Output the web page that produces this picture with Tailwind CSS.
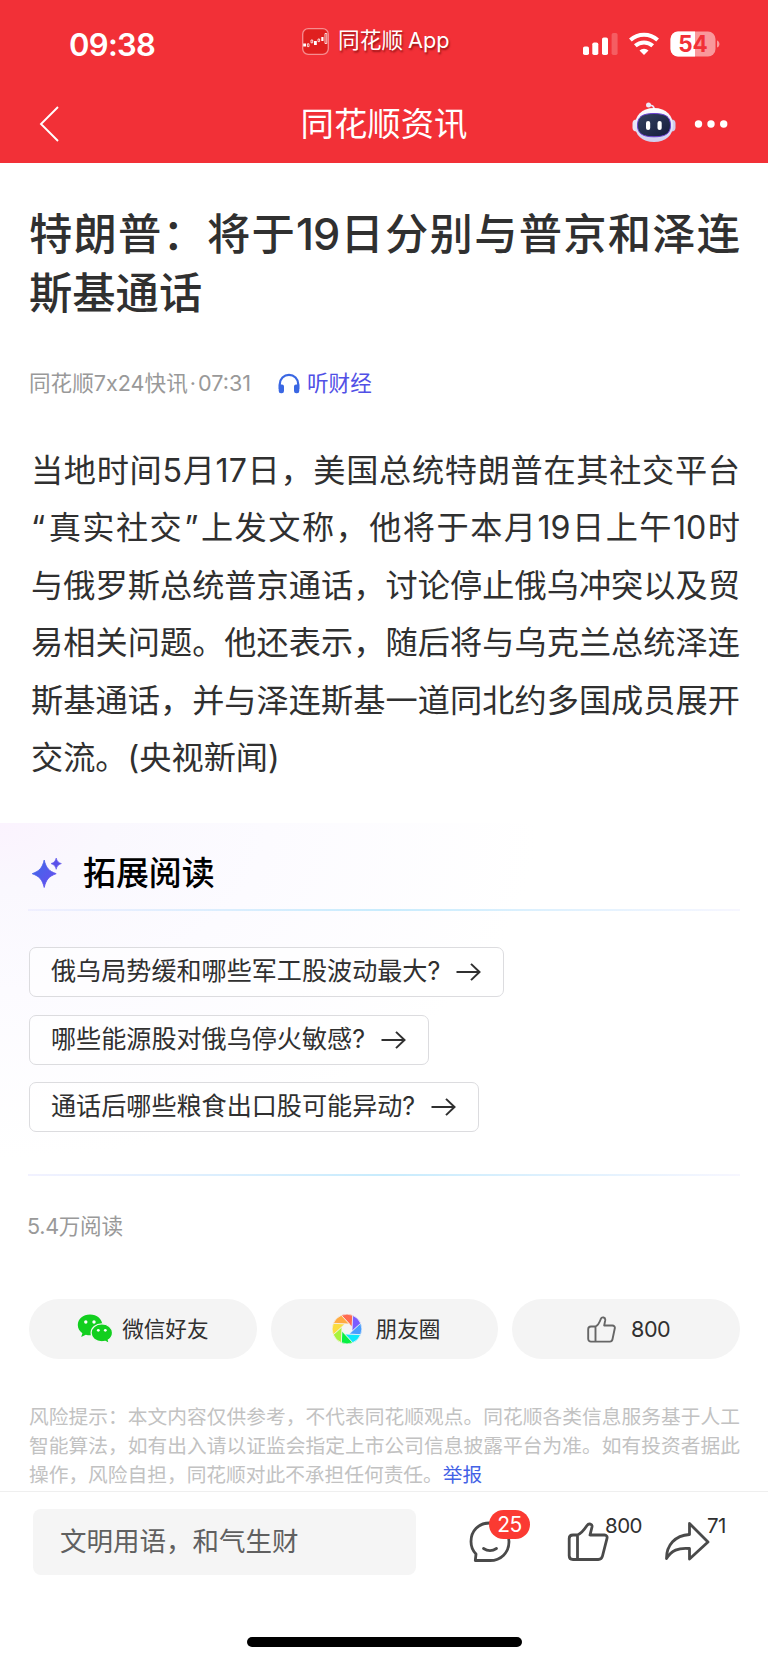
<!DOCTYPE html>
<html lang="zh-CN">

<head>
  <meta charset="UTF-8">
  <meta name="viewport" content="width=device-width, initial-scale=1.0">
  <title>同花顺资讯</title>
  <script src="https://cdn.jsdelivr.net/npm/@tailwindcss/browser@4"></script>
</head>

<body class="bg-white w-[768px] h-[1662px] overflow-hidden flex flex-col font-['Inter','Noto_Sans_CJK_SC',sans-serif] text-[#303030] whitespace-nowrap">

  <!-- Header -->
  <header class="bg-[#f23037] h-[163px] shrink-0 text-white">
    <!-- Status bar -->
    <div class="h-[88px] grid grid-cols-[302px_1fr_auto] items-center">
      <div class="pl-[69px] text-[31px] font-semibold leading-none tracking-[-0.700px]">09:38</div>
      <div class="flex items-center gap-[9px] -mt-[6px]">
        <svg class="w-[27px] h-[27px]" viewBox="0 0 27 27" fill="none">
          <rect x=".7" y=".7" width="25.6" height="25.6" rx="5.5" fill="#e0201f" stroke="#f68d90" stroke-width="1.3" />
          <path d="M1.200 15.500h2.800v3H1.200zM12 13h2.800v4H12zM19.300 9h2.200v4h-2.200z" fill="#fff" />
          <path d="M5.400 15.800h1.600v2.800H5.400zM9 12h1.700v2.800H9zM16 11h1.600v2.600H16zM23 5.500h1.800v10H23z" stroke="#fff" stroke-width=".8" />
        </svg>
        <div class="text-[21.7px] leading-none [text-shadow:1px_2px_2px_rgba(90,0,0,0.6)]">同花顺<span class="ml-[5px]">App</span></div>
      </div>
      <div class="flex items-center pr-[48px]">
        <svg class="w-[138px] h-[26px]" viewBox="0 0 138 26">
          <g fill="#fff">
            <rect x="1" y="15.500" width="6" height="8.500" rx="1.800" />
            <rect x="10.300" y="11.500" width="6" height="12.500" rx="1.800" />
            <rect x="20" y="6.500" width="6" height="17.500" rx="1.800" />
            <rect x="29.600" y="2" width="6" height="22" rx="1.800" opacity=".22" />
            <path d="M62 24l-4.500-4.600a6.600 6.600 0 0 1 9 0z" />
          </g>
          <path d="M48.400 9a20 20 0 0 1 27.200 0M53.300 14.800a13 13 0 0 1 17.400 0" fill="none" stroke="#fff" stroke-width="4" />
          <rect x="88.500" y=".5" width="45" height="25" rx="7.500" fill="#fff" opacity=".5" />
          <path d="M113 .5v25H96a7.500 7.500 0 0 1-7.500-7.500V8A7.500 7.500 0 0 1 96 .5z" fill="#fff" />
          <path d="M135 9.500c3.300 1 3.300 6 0 7z" fill="#fff" opacity=".5" />
          <text x="111" y="21" text-anchor="middle" font-family="Inter" font-weight="700" font-size="22.500" fill="#f23037">54</text>
        </svg>
      </div>
    </div>
    <!-- Nav bar -->
    <div class="h-[73px] grid grid-cols-3 items-center">
      <svg class="ml-[38px] -mt-[2px] w-[22px] h-[38px]" viewBox="0 0 22 38" fill="none" stroke="#fff" stroke-width="1.900">
        <path d="M20 2L3 19l17 17" />
      </svg>
      <h1 class="text-center text-[33.400px] leading-none">同花顺资讯</h1>
      <div class="flex items-center justify-end gap-[18px] pr-[40px] -mt-[3px]">
        <svg class="w-[44px] h-[42px]" viewBox="0 0 44 42">
          <defs>
            <linearGradient id="shell" x1="0" y1="0" x2="0" y2="1">
              <stop offset="0" stop-color="#fff" />
              <stop offset="1" stop-color="#cfcdee" />
            </linearGradient>
            <linearGradient id="visor" x1="0" y1="0" x2="1" y2="1">
              <stop offset="0" stop-color="#34425f" />
              <stop offset="1" stop-color="#151b3c" />
            </linearGradient>
          </defs>
          <path d="M16 3.500c4-1 6.500 1 6 4" fill="none" stroke="#e9e6f8" stroke-width="1.600" />
          <circle cx="16.500" cy="3" r="2.500" fill="#eceafa" />
          <rect x=".5" y="17.500" width="8" height="12" rx="4" fill="#e6e4f6" />
          <rect x="35.500" y="17.500" width="8" height="12" rx="4" fill="#cfccec" />
          <path d="M22 6C34.500 6 41 14 41 23.500S34 40 22 40 3 33 3 23.500 9.500 6 22 6z" fill="url(#shell)" />
          <path d="M22 11.500c12 0 16.500 3.500 16.500 11.800S33.500 34.800 22 34.800 5.500 31.500 5.500 23.300 10 11.500 22 11.500z" fill="url(#visor)" stroke="#6a3fd0" stroke-width="1" />
          <rect x="14" y="19" width="4.200" height="9" rx="2.100" fill="#fff" />
          <rect x="25.500" y="19" width="4.200" height="9" rx="2.100" fill="#fff" />
        </svg>
        <svg class="mt-[2px] w-[34px] h-[8px]" viewBox="0 0 34 8" fill="#fff">
          <circle cx="4.500" cy="4" r="3.700" />
          <circle cx="17" cy="4" r="3.700" />
          <circle cx="29.700" cy="4" r="3.700" />
        </svg>
      </div>
    </div>
  </header>

  <!-- Article -->
  <article class="h-[660px] shrink-0">
    <h2 class="ml-[29px] mr-[28px] pt-[42px] text-[43.3px] leading-[59px] font-medium">
      <span class="block [text-align-last:justify]">特朗普：将于<span class="tracking-[-1px]">19</span>日分别与普京和泽连</span>
      <span class="block">斯基通话</span>
    </h2>
    <div class="mt-[44px] ml-[29px] h-[32px] flex items-center text-[21.6px] text-[#999]">
      <span class="w-[249px]">同花顺7x24快讯<span class="mx-[2px]">·</span>07:31</span>
      <svg class="w-[22px] h-[21px]" viewBox="0 0 22 21">
        <path d="M1.800 16v-5a9.200 9.200 0 0 1 18.400 0v5" fill="none" stroke="#3a67e3" stroke-width="2.200" />
        <path d="M.7 11.500h3.300a2 2 0 0 1 2 2V18a2.300 2.300 0 0 1-2.300 2.300H3A2.300 2.300 0 0 1 .7 18zM21.300 11.500H18a2 2 0 0 0-2 2V18a2.300 2.300 0 0 0 2.300 2.300h.7a2.300 2.300 0 0 0 2.300-2.300z" fill="#3a67e3" />
      </svg>
      <span class="ml-[7px] text-[#5150e6]">听财经</span>
    </div>
    <div class="mt-[43px] ml-[31px] mr-[28px] text-[32.200px] leading-[57.400px]">
      <p class="[text-align-last:justify]">当地时间5月17日，美国总统特朗普在其社交平台</p>
      <p class="[text-align-last:justify]"><span class="mr-[2px]">“</span>真实社交<span class="mx-[1px]">”</span>上发文称，他将于本月19日上午10时</p>
      <p class="[text-align-last:justify]">与俄罗斯总统普京通话，讨论停止俄乌冲突以及贸</p>
      <p class="[text-align-last:justify]">易相关问题。他还表示，随后将与乌克兰总统泽连</p>
      <p class="[text-align-last:justify]">斯基通话，并与泽连斯基一道同北约多国成员展开</p>
      <p>交流。(央视新闻)</p>
    </div>
  </article>

  <!-- Extended reading -->
  <section class="h-[353px] shrink-0 px-[28px] flex flex-col bg-[radial-gradient(ellipse_70%_95%_at_0%_0%,#fbf3fe_0%,#faf8fe_20%,#fcfbff_50%,#ffffff_100%)]">
    <div class="h-[86px] pt-[14px] flex items-center">
      <svg class="ml-[3px] w-[32px] h-[32px]" viewBox="0 0 32 32">
        <defs>
          <linearGradient id="spark" x1="0" y1="0" x2="1" y2="1">
            <stop offset="0" stop-color="#3d6be8" />
            <stop offset="1" stop-color="#6a4cf0" />
          </linearGradient>
        </defs>
        <path d="M13.200 3c2 8 4.500 10.800 12 13.700-7.500 2.800-10 5.800-12 13.800-2-8-4.500-11-12-13.800C8.700 13.800 11.200 11 13.200 3z" fill="url(#spark)" stroke="url(#spark)" stroke-width=".8" stroke-linejoin="round" />
        <path d="M25.200 1c.9 3.300 2 4.500 5.200 5.600-3.200 1.200-4.300 2.400-5.200 5.700-.9-3.300-2-4.500-5.200-5.700C23.200 5.500 24.300 4.300 25.200 1z" fill="#5b50ea" stroke="#5b50ea" stroke-width=".6" stroke-linejoin="round" />
      </svg>
      <h3 class="ml-[20px] text-[32.900px] leading-none font-medium text-black">拓展阅读</h3>
    </div>
    <div class="h-[2px] bg-linear-to-r from-[#e9e9ff]/60 via-[#c8ecfd] to-[#eeeeff]/50"></div>
    <div class="mt-[36px] ml-[1px] flex flex-col gap-[17.500px] text-[25.100px] leading-none">
      <div class="w-[475px] h-[50px] pl-[21px] pr-[22px] flex items-center justify-between rounded-[7px] border border-[#dcdcdf] bg-white/60">
        <span>俄乌局势缓和哪些军工股波动最大?</span>
        <svg class="w-[25px] h-[18px]" viewBox="0 0 25 18" fill="none" stroke="#303030" stroke-width="2"><path d="M.5 9h23M15 .9L23.500 9 15 17.100" /></svg>
      </div>
      <div class="w-[400px] h-[50px] pl-[21px] pr-[22px] flex items-center justify-between rounded-[7px] border border-[#dcdcdf] bg-white/60">
        <span>哪些能源股对俄乌停火敏感?</span>
        <svg class="w-[25px] h-[18px]" viewBox="0 0 25 18" fill="none" stroke="#303030" stroke-width="2"><path d="M.5 9h23M15 .9L23.500 9 15 17.100" /></svg>
      </div>
      <div class="w-[450px] h-[50px] pl-[21px] pr-[22px] flex items-center justify-between rounded-[7px] border border-[#dcdcdf] bg-white/60">
        <span>通话后哪些粮食出口股可能异动?</span>
        <svg class="w-[25px] h-[18px]" viewBox="0 0 25 18" fill="none" stroke="#303030" stroke-width="2"><path d="M.5 9h23M15 .9L23.500 9 15 17.100" /></svg>
      </div>
    </div>
    <div class="mt-auto h-[2px] shrink-0 bg-linear-to-r from-[#e9e9ff]/60 via-[#c8ecfd] to-[#eeeeff]/50"></div>
  </section>

  <!-- Read count, share buttons, disclaimer -->
  <section class="h-[315px] shrink-0 px-[28px]">
    <div class="pt-[34px] -ml-[1px] text-[21.600px] leading-[32px] text-[#999] tracking-[-0.300px]">5.4万阅读</div>
    <div class="mt-[57px] ml-[1px] grid grid-cols-3 gap-[14px] text-[21.600px] h-[60px]">
      <div class="flex items-center justify-center rounded-full bg-[#f4f4f4]">
        <svg class="w-[36px] h-[30px]" viewBox="0 0 36 30">
          <path d="M13 .5C6 .5.800 5 .8 11c0 3.500 1.800 6.300 4.600 8.200L4.200 23l4.600-2.300c1.400.4 2.800.6 4.200.6 7 0 12.400-4.500 12.400-10.300S20 .5 13 .5z" fill="#12cf1f" />
          <path d="M24.800 9.800c-6 0-10.700 4-10.700 9s4.700 9 10.700 9c1.200 0 2.400-.2 3.500-.5l4 2.200-1-3.400c2.600-1.700 4.200-4.300 4.200-7.300 0-5-4.700-9-10.700-9z" fill="#12cf1f" stroke="#f4f4f4" stroke-width="1.200" />
          <g fill="#fff">
            <circle cx="8.800" cy="8" r="1.700" />
            <circle cx="17" cy="8" r="1.700" />
            <circle cx="21.300" cy="16.300" r="1.400" />
            <circle cx="28.300" cy="16.300" r="1.400" />
          </g>
        </svg>
        <span class="ml-[9px]">微信好友</span>
      </div>
      <div class="pl-[3px] flex items-center justify-center rounded-full bg-[#f4f4f4]">
        <svg class="w-[30px] h-[30px]" viewBox="-15 -15 30 30" stroke="#f4f4f4" stroke-width=".7">
          <path d="M-5.700-13.700A14.800 14.800 0 0 1 5.700-13.700L5.200-1.900z" fill="#ff6a50" />
          <path d="M-5.700-13.700A14.800 14.800 0 0 1 5.700-13.700L5.200-1.900z" fill="#7b5cff" transform="rotate(45)" />
          <path d="M-5.700-13.700A14.800 14.800 0 0 1 5.700-13.700L5.200-1.900z" fill="#489dff" transform="rotate(90)" />
          <path d="M-5.700-13.700A14.800 14.800 0 0 1 5.700-13.700L5.200-1.900z" fill="#0ee6fb" transform="rotate(135)" />
          <path d="M-5.700-13.700A14.800 14.800 0 0 1 5.700-13.700L5.200-1.900z" fill="#06f042" transform="rotate(180)" />
          <path d="M-5.700-13.700A14.800 14.800 0 0 1 5.700-13.700L5.200-1.900z" fill="#a9f23c" transform="rotate(225)" />
          <path d="M-5.700-13.700A14.800 14.800 0 0 1 5.700-13.700L5.200-1.900z" fill="#fbdc3e" transform="rotate(270)" />
          <path d="M-5.700-13.700A14.800 14.800 0 0 1 5.700-13.700L5.200-1.900z" fill="#ffab42" transform="rotate(315)" />
        </svg>
        <span class="ml-[14px]">朋友圈</span>
      </div>
      <div class="pl-[5px] flex items-center justify-center rounded-full bg-[#f4f4f4]">
        <svg class="w-[29px] h-[27px]" viewBox="0 0 29 27" fill="none" stroke="#666" stroke-width="1.900" stroke-linejoin="round">
          <path d="M8.500 10.500c3-1.500 4-4 5.200-7.300 1.200-3 5-2 4.500 1.200l-1 5.100h8.200c1.700 0 2.700 1.200 2.400 2.800l-2.300 11c-.3 1.500-1.200 2.300-2.600 2.300H4c-1.700 0-2.800-1-2.800-2.800V13.300c0-1.700 1-2.800 2.800-2.800zM8.500 10.500v15" />
        </svg>
        <span class="ml-[15px] tracking-[-0.500px]">800</span>
      </div>
    </div>
    <div class="mt-[44px] ml-[1px] text-[19.720px] leading-[28.900px] text-[#c2c2c2]">
      <p class="[text-align-last:justify]">风险提示：本文内容仅供参考，不代表同花顺观点。同花顺各类信息服务基于人工</p>
      <p class="[text-align-last:justify]">智能算法，如有出入请以证监会指定上市公司信息披露平台为准。如有投资者据此</p>
      <p>操作，风险自担，同花顺对此不承担任何责任。<a class="text-[#4362e6]">举报</a></p>
    </div>
  </section>

  <!-- Bottom toolbar -->
  <footer class="grow border-t border-[#efefef] flex flex-col">
    <div class="pt-[17px] pl-[33px] flex">
      <div class="w-[383px] h-[66px] pl-[27px] flex items-center rounded-[8px] bg-[#f5f5f5] text-[26.500px] text-[#606060]">文明用语，和气生财</div>
      <div class="relative ml-[53px] mt-[12px] w-[42px] h-[42px]">
        <svg class="w-[42px] h-[42px]" viewBox="0 0 42 42" fill="none" stroke="#4a4a4a" stroke-width="2.800" stroke-linecap="round" stroke-linejoin="round">
          <path d="M20.500 2C9.500 2 2 10 2 20.500c0 5 1.800 9.300 5 12.500L6.300 39.500H21C32 39.500 40 31.500 40 20.700 40 10 32 2 20.500 2z" />
          <path d="M14.500 27.500c4 2.600 9 2.600 13 0" />
        </svg>
        <span class="absolute left-[20px] -top-[11px] w-[41px] h-[29px] rounded-full bg-[#fb3a32] text-white text-[21px] leading-[30px] text-center tracking-[-0.500px]">25</span>
      </div>
      <div class="relative ml-[56px] mt-[12px] w-[42px] h-[42px]">
        <svg class="w-[42px] h-[42px]" viewBox="0 0 42 42" fill="none" stroke="#4a4a4a" stroke-width="2.800" stroke-linejoin="round">
          <path d="M10.500 14c4-1.500 6.500-5 9.500-9.500 2-2.800 5.500-1.300 5 1.500L23 14h14.500c2 0 3 1.500 2.500 3.300L35.500 35c-.6 2.300-2 3.500-4.200 3.500H6c-2.500 0-3.800-1.300-3.800-3.800V17.500C2.200 15.200 3.500 14 6 14zM10.500 14v24.500" />
        </svg>
        <span class="absolute left-[38px] -top-[5px] text-[20.500px] leading-none tracking-[-0.500px]">800</span>
      </div>
      <div class="relative ml-[55px] mt-[12px] w-[46px] h-[42px]">
        <svg class="w-[46px] h-[42px]" viewBox="0 0 46 42" fill="none" stroke="#4a4a4a" stroke-width="2.800" stroke-linejoin="round">
          <path d="M25.500 2.500L44 21 25.500 38V27.500C14 26.500 7.500 29.500 2.500 37.500 2.500 24 11 14.500 25.500 13.500z" />
        </svg>
        <span class="absolute left-[43px] -top-[5px] text-[20.500px] leading-none tracking-[-0.500px]">71</span>
      </div>
    </div>
    <div class="mt-auto mb-[15px] ml-[247px] w-[275px] h-[10px] rounded-full bg-black"></div>
  </footer>
</body>

</html>
